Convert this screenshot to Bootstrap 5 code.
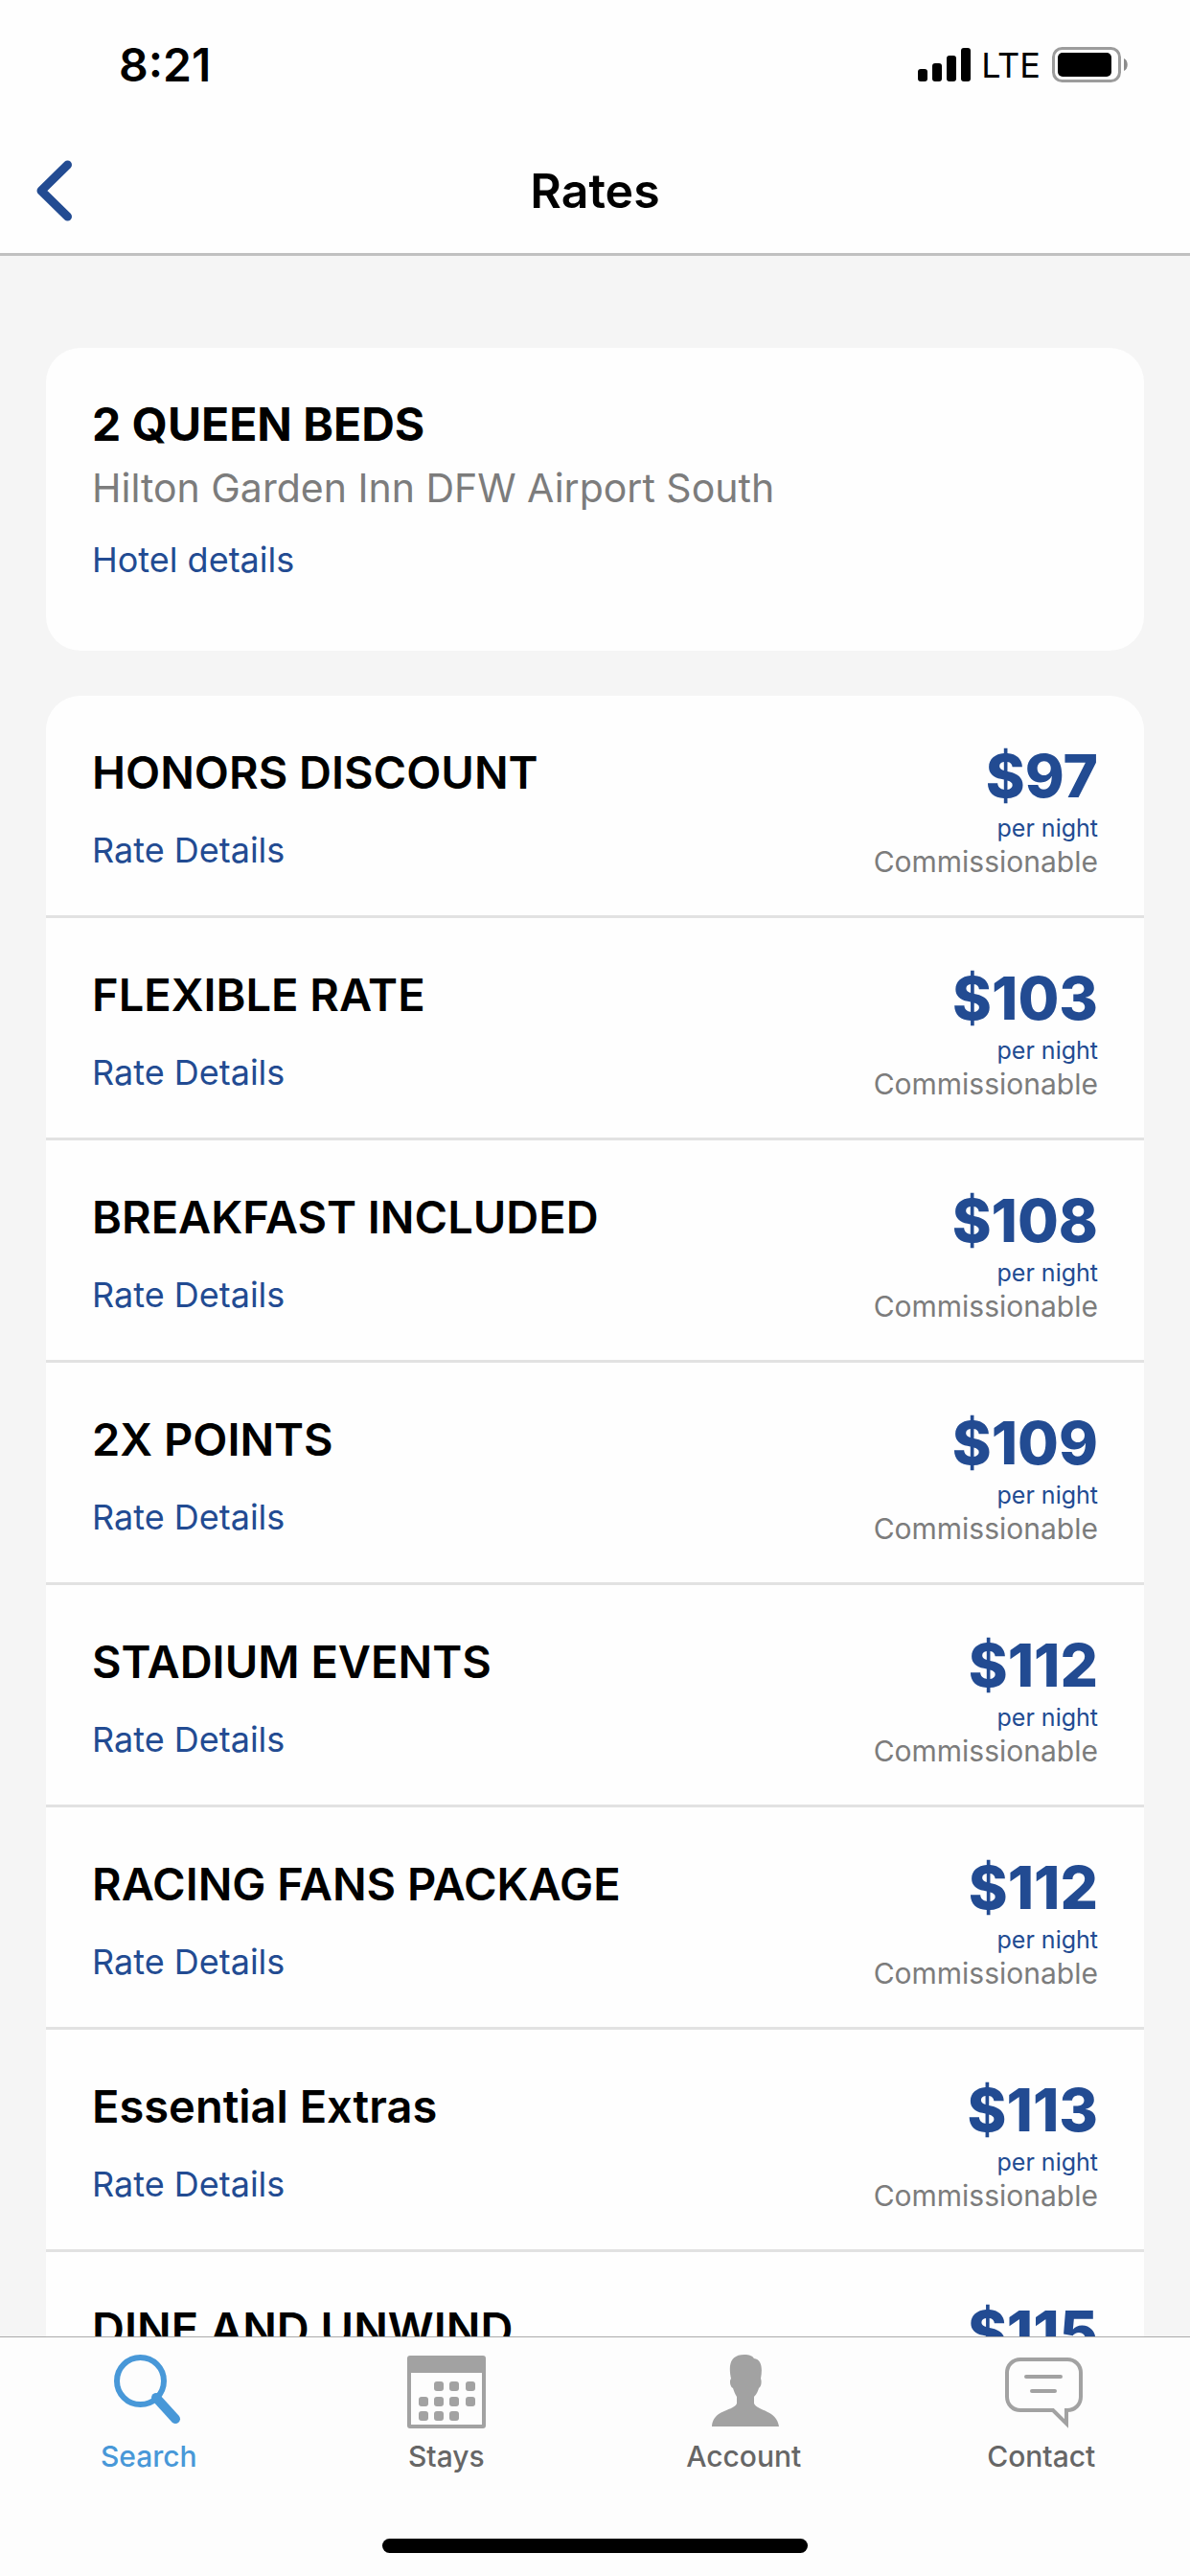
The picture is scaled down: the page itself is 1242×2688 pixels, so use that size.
<!DOCTYPE html>
<html lang="en">
<head>
<meta charset="utf-8">
<meta name="viewport" content="width=device-width, initial-scale=1">
<title>Rates</title>
<link href="https://cdn.jsdelivr.net/npm/bootstrap@5.3.0/dist/css/bootstrap.min.css" rel="stylesheet">
<style>
  body { font-family: Inter, "Liberation Sans", sans-serif; background: #f5f5f5; color: #000; }
  a { color: #224b92; text-decoration: none; }
  .app-head { background: #fefefe; border-bottom: 3px solid #c0c0c0; }
  .status-row { height: 134px; padding: 2px 64px 0 124px; }
  .clock { font-size: 48px; line-height: 56px; }
  .carrier { font-size: 36px; line-height: 44px; margin: 0 12px 0 10px; }
  .title-row { height: 130px; padding: 0 36px; }
  .title-row > * { flex: 1 1 0; }
  .back-btn { line-height: 0; text-align: left; }
  .page-title { font-size: 50px; line-height: 60px; text-align: center; }
  .scroll-area { padding: 96px 48px 0; gap: 47px; min-height: 0; }
  .panel { border: 0; border-radius: 36px; background: #fefefe; overflow: hidden; flex-shrink: 0; }
  .room-panel { padding: 49px 48px 73px; }
  .room-name { font-size: 48px; line-height: 62px; }
  .hotel-name { font-size: 41px; line-height: 70px; color: #7c7c7c; }
  .detail-link { font-size: 36px; line-height: 44px; }
  .hotel-link { margin-top: 18px; }
  .list-group-flush > .rate-row { border: 0 solid #e2e2e2; border-bottom-width: 3px; background: #fefefe; padding: 46px 48px 37px; color: #000; }
  .rate-name { font-size: 47px; line-height: 68px; margin-bottom: 25px; }
  .price { font-size: 62px; line-height: 76px; font-weight: 800; color: #224b92; }
  .per-night { font-size: 25px; line-height: 32px; color: #224b92; }
  .commission { font-size: 30px; line-height: 38px; color: #7c7c7c; }
  .tab-bar { background: #fdfdfd; border-top: 1px solid #aaa; height: 250px; flex-shrink: 0; }
  .tab-item { flex: 1 1 0; padding: 16px 0 0; color: #666; font-size: 30px; line-height: 40px; }
  .tab-item svg { margin-bottom: 8px; color: #a2a2a2; }
  .tab-item.active, .tab-item.active svg { color: #4898d8; }
  .home-bar { width: 444px; height: 15px; border-radius: 8px; background: #000; margin-bottom: 24px; }
</style>
<script src="https://cdn.jsdelivr.net/npm/bootstrap@5.3.0/dist/js/bootstrap.bundle.min.js"></script>
</head>
<body class="d-flex flex-column vh-100 overflow-hidden">
<header class="app-head flex-shrink-0">
  <div class="status-row d-flex align-items-center">
    <span class="clock fw-semibold me-auto">8:21</span>
    <svg width="56" height="36" viewBox="0 0 56 36" aria-hidden="true"><rect x="0" y="22" width="10" height="13" rx="3"/><rect x="15" y="16" width="10" height="19" rx="3"/><rect x="30" y="8" width="10" height="27" rx="3"/><rect x="45" y="0" width="10" height="35" rx="3"/></svg>
    <span class="carrier">LTE</span>
    <svg width="80" height="38" viewBox="0 0 80 38" aria-hidden="true"><rect x="1.5" y="1.5" width="69" height="34" rx="9" fill="none" stroke="#9c9c9c" stroke-width="3"/><rect x="6" y="6" width="56" height="25" rx="5"/><path d="M75 12c5 2 5 11 0 13z" fill="#8c8c8c"/></svg>
  </div>
  <div class="title-row d-flex align-items-center">
    <button class="back-btn btn p-0 border-0" type="button" aria-label="Back"><svg width="42" height="64" viewBox="0 0 42 64" fill="none" stroke="#224b92" stroke-width="9" stroke-linecap="round" stroke-linejoin="round"><path d="M34.500 5 7 32l27.500 27"/></svg></button>
    <h1 class="page-title fw-semibold m-0">Rates</h1>
    <span></span>
  </div>
</header>

<main class="scroll-area d-flex flex-column flex-grow-1 overflow-hidden">
  <section class="panel room-panel">
    <h2 class="room-name fw-bold m-0">2 QUEEN BEDS</h2>
    <p class="hotel-name m-0">Hilton Garden Inn DFW Airport South</p>
    <a class="detail-link hotel-link d-block" href="#hotel">Hotel details</a>
  </section>
  <ul class="panel list-group list-group-flush" id="rates">
    <li class="rate-row list-group-item d-flex justify-content-between"><div><h3 class="rate-name fw-semibold">HONORS DISCOUNT</h3><a class="detail-link d-block" href="#r1">Rate Details</a></div><div class="text-end"><div class="price">$97</div><div class="per-night">per night</div><div class="commission">Commissionable</div></div></li>
    <li class="rate-row list-group-item d-flex justify-content-between"><div><h3 class="rate-name fw-semibold">FLEXIBLE RATE</h3><a class="detail-link d-block" href="#r2">Rate Details</a></div><div class="text-end"><div class="price">$103</div><div class="per-night">per night</div><div class="commission">Commissionable</div></div></li>
    <li class="rate-row list-group-item d-flex justify-content-between"><div><h3 class="rate-name fw-semibold">BREAKFAST INCLUDED</h3><a class="detail-link d-block" href="#r3">Rate Details</a></div><div class="text-end"><div class="price">$108</div><div class="per-night">per night</div><div class="commission">Commissionable</div></div></li>
    <li class="rate-row list-group-item d-flex justify-content-between"><div><h3 class="rate-name fw-semibold">2X POINTS</h3><a class="detail-link d-block" href="#r4">Rate Details</a></div><div class="text-end"><div class="price">$109</div><div class="per-night">per night</div><div class="commission">Commissionable</div></div></li>
    <li class="rate-row list-group-item d-flex justify-content-between"><div><h3 class="rate-name fw-semibold">STADIUM EVENTS</h3><a class="detail-link d-block" href="#r5">Rate Details</a></div><div class="text-end"><div class="price">$112</div><div class="per-night">per night</div><div class="commission">Commissionable</div></div></li>
    <li class="rate-row list-group-item d-flex justify-content-between"><div><h3 class="rate-name fw-semibold">RACING FANS PACKAGE</h3><a class="detail-link d-block" href="#r6">Rate Details</a></div><div class="text-end"><div class="price">$112</div><div class="per-night">per night</div><div class="commission">Commissionable</div></div></li>
    <li class="rate-row list-group-item d-flex justify-content-between"><div><h3 class="rate-name fw-semibold">Essential Extras</h3><a class="detail-link d-block" href="#r7">Rate Details</a></div><div class="text-end"><div class="price">$113</div><div class="per-night">per night</div><div class="commission">Commissionable</div></div></li>
    <li class="rate-row list-group-item d-flex justify-content-between"><div><h3 class="rate-name fw-semibold">DINE AND UNWIND</h3></div><div class="text-end"><div class="price">$115</div></div></li>
  </ul>
</main>

<nav class="tab-bar d-flex flex-column align-items-center justify-content-between" aria-label="Main">
  <div class="d-flex w-100">
    <a class="tab-item active fw-medium d-flex flex-column align-items-center" href="#search" aria-current="page">
      <svg width="84" height="80" viewBox="0 0 84 80" fill="none" stroke="currentColor"><circle cx="33.500" cy="29.500" r="24.500" stroke-width="6"/><path d="M50 47 70 69" stroke-width="10" stroke-linecap="round"/></svg>Search</a>
    <a class="tab-item fw-medium d-flex flex-column align-items-center" href="#stays">
      <svg width="84" height="80" viewBox="0 0 84 80" fill="currentColor"><path fill-rule="evenodd" d="M4 3h76a3 3 0 0 1 3 3v70a3 3 0 0 1-3 3H4a3 3 0 0 1-3-3V6a3 3 0 0 1 3-3zm1 18v54h74V21z"/><g><rect x="29" y="30" width="10" height="10" rx="3"/><rect x="45" y="30" width="10" height="10" rx="3"/><rect x="62" y="30" width="10" height="10" rx="3"/><rect x="13" y="46" width="10" height="10" rx="3"/><rect x="29" y="46" width="10" height="10" rx="3"/><rect x="45" y="46" width="10" height="10" rx="3"/><rect x="62" y="46" width="10" height="10" rx="3"/><rect x="13" y="61" width="10" height="10" rx="3"/><rect x="29" y="61" width="10" height="10" rx="3"/><rect x="45" y="61" width="10" height="10" rx="3"/></g></svg>Stays</a>
    <a class="tab-item fw-medium d-flex flex-column align-items-center" href="#account">
      <svg width="84" height="80" viewBox="0 0 84 80" fill="currentColor"><path d="M9 77C10 59 32 61 35 53V46C33 43 32 40 31 37 28 36 27 29 29 27 26 13 28 2 43 2 48 2 51 3 53 6 61 7 62 16 60 27 61 29 61 35 58 37 57 40 56 43 53 46V53C57 61 77 60 79 77z"/></svg>Account</a>
    <a class="tab-item fw-medium d-flex flex-column align-items-center" href="#contact">
      <svg width="84" height="80" viewBox="-2 0 84 80" overflow="visible" fill="none" stroke="currentColor" stroke-width="4"><path d="M66 60h1c8 0 14-6 14-14V21c0-8-6-14-14-14H18C10 7 4 13 4 21v25c0 8 6 14 14 14h34l14 14V58"/><path d="M24 25h36M30 40h24" stroke-linecap="round"/></svg>Contact</a>
  </div>
  <div class="home-bar"></div>
</nav>
</body>
</html>
